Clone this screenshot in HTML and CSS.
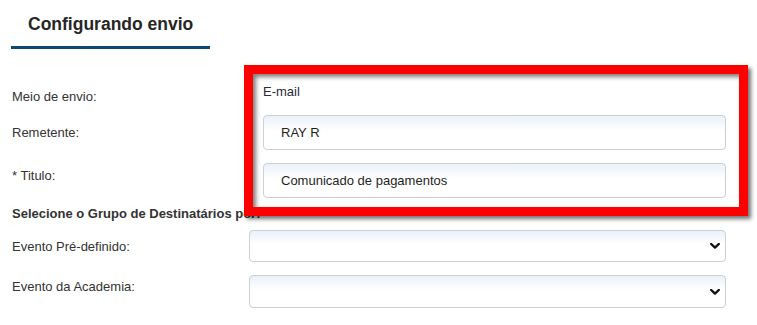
FILE: index.html
```html
<!DOCTYPE html>
<html lang="pt-BR">
<head>
<meta charset="utf-8">
<title>Configurando envio</title>
<link rel="stylesheet" href="styles.css">
</head>
<body>
<div class="page">
  <div class="tab-header"><h1 class="tab-title">Configurando envio</h1></div>
  <div class="form">
    <div class="row row-1">
      <div class="label">Meio de envio:</div>
      <div class="control inset static">E-mail</div>
    </div>
    <div class="row row-2">
      <div class="label">Remetente:</div>
      <div class="control inset"><input class="field" type="text" value="RAY R"></div>
    </div>
    <div class="row row-3">
      <div class="label">* Titulo:</div>
      <div class="control inset"><input class="field" type="text" value="Comunicado de pagamentos"></div>
    </div>
    <div class="row row-4">
      <div class="section-title">Selecione o Grupo de Destinatários por:</div>
    </div>
    <div class="row row-5">
      <div class="label">Evento Pré-definido:</div>
      <div class="control select-wrap">
        <select class="field select"><option></option></select>
        <svg class="chev" width="10" height="6" viewBox="0 0 10 6"><path d="M1.2 1 L5 4.6 L8.8 1" fill="none" stroke="#111" stroke-width="2.4" stroke-linecap="round" stroke-linejoin="round"/></svg>
      </div>
    </div>
    <div class="row row-6">
      <div class="label">Evento da Academia:</div>
      <div class="control select-wrap">
        <select class="field select tall"><option></option></select>
        <svg class="chev" width="10" height="6" viewBox="0 0 10 6"><path d="M1.2 1 L5 4.6 L8.8 1" fill="none" stroke="#111" stroke-width="2.4" stroke-linecap="round" stroke-linejoin="round"/></svg>
      </div>
    </div>
  </div>
  <div class="highlight"></div>
</div>
</body>
</html>
```
FILE: styles.css
```css
html, body {
  margin: 0;
  padding: 0;
  background: #fff;
}
body {
  font-family: "Liberation Sans", Arial, sans-serif;
  color: #333;
}
.page {
  position: relative;
  width: 757px;
  height: 325px;
  overflow: hidden;
}
.tab-header {
  margin-left: 11px;
  width: 199px;
  padding: 14px 0 12px 17px;
  box-sizing: border-box;
  border-bottom: 3px solid #0d4a72;
}
.tab-title {
  margin: 0;
  font-size: 17.5px;
  line-height: 20px;
  font-weight: bold;
  color: #262626;
}
.form {
  padding-left: 12px;
}
.row {
  display: flex;
  align-items: flex-start;
}
.label {
  width: 237px;
  flex: none;
  font-size: 13px;
  line-height: 15px;
  color: #333;
}
.control {
  width: 477px;
  flex: none;
  position: relative;
}
.control.inset {
  margin-left: 14px;
  width: 463px;
}
.static {
  font-size: 13px;
  line-height: 15px;
  color: #2a2a3a;
}
.row-1 { margin-top: 35px; height: 31px; }
.row-1 .label { padding-top: 5px; }
.row-2 { height: 48px; }
.row-2 .label { padding-top: 10px; }
.row-3 { height: 42px; }
.row-3 .label { padding-top: 5px; }
.row-4 { height: 25px; padding-top: 1px; box-sizing: border-box; }
.row-5 { height: 45px; }
.row-5 .label { padding-top: 9px; }
.row-6 { height: 40px; }
.row-6 .label { padding-top: 4px; }
.section-title {
  font-size: 13px;
  line-height: 15px;
  font-weight: bold;
  color: #333;
}
.field {
  display: block;
  width: 100%;
  height: 35px;
  box-sizing: border-box;
  margin: 0;
  border: 1px solid #cfcfcf;
  border-radius: 4px;
  background: linear-gradient(to bottom, #e9f1fb 0%, #ffffff 45%, #ffffff 100%);
  padding: 0 0 0 17px;
  font-family: "Liberation Sans", Arial, sans-serif;
  font-size: 13px;
  color: #1e1e1e;
  outline: none;
}
.select {
  -webkit-appearance: none;
  appearance: none;
  height: 32px;
}
.select.tall {
  height: 33px;
}
.chev {
  position: absolute;
  right: 6px;
  top: 50%;
  margin-top: -3px;
  pointer-events: none;
}
.highlight {
  position: absolute;
  left: 244px;
  top: 65px;
  width: 504px;
  height: 151px;
  box-sizing: border-box;
  border: 9px solid #ff0000;
  box-shadow: 3px 3px 4px rgba(0, 0, 0, 0.55), inset 3px 3px 4px rgba(0, 0, 0, 0.5);
  pointer-events: none;
}
```
